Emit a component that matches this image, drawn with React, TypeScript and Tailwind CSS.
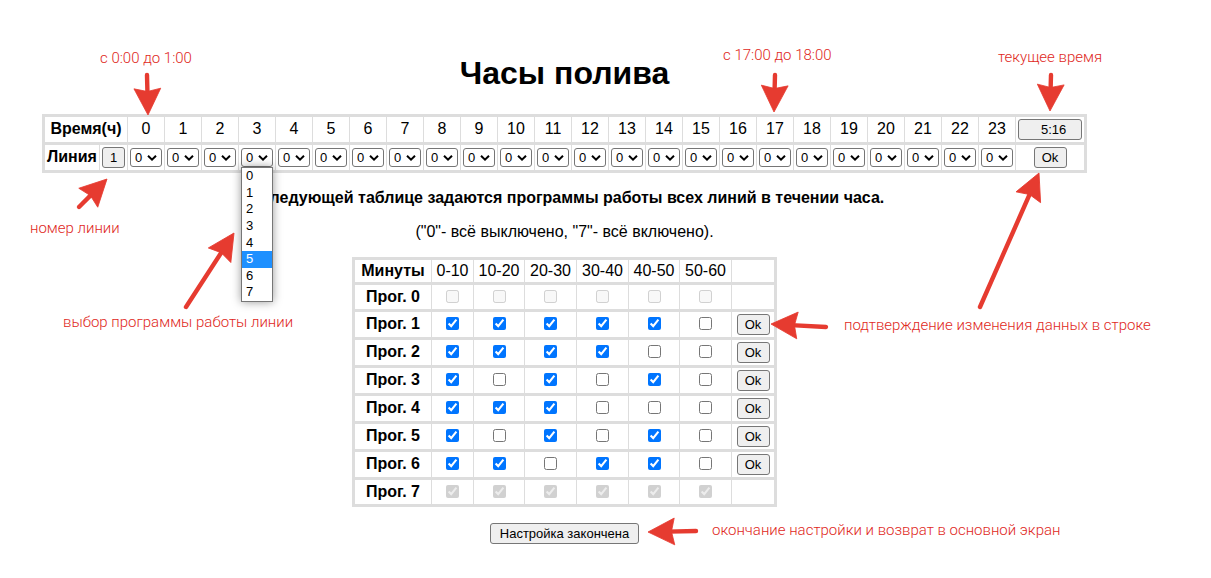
import { useState } from "react";

const HOURS = Array.from({ length: 24 }, (_, i) => i);
const CHOICES = [0, 1, 2, 3, 4, 5, 6, 7];
const OPEN_HOUR = 3;
const INTERVALS = ["0-10", "10-20", "20-30", "30-40", "40-50", "50-60"];
const INITIAL = ["000000", "111110", "111100", "101010", "111000", "101010", "110110", "111111"];

const ARROWS = [
  { from: [147, 75], to: [148, 115] },
  { from: [775, 75], to: [774, 112] },
  { from: [1051, 75], to: [1050, 111] },
  { from: [79, 207], to: [107, 179] },
  { from: [186, 307], to: [234, 233] },
  { from: [980, 307], to: [1039, 173] },
  { from: [826, 327], to: [771, 324] },
  { from: [696, 531], to: [648, 532] },
];

const NOTES = [
  { text: "с 0:00 до 1:00", place: "left-[100px] top-[49px]" },
  { text: "с 17:00 до 18:00", place: "left-[723px] top-[46px]" },
  { text: "текущее время", place: "left-[998px] top-[48px]" },
  { text: "номер линии", place: "left-[30px] top-[219px]" },
  { text: "выбор программы работы линии", place: "left-[63px] top-[313px]" },
  { text: "подтверждение изменения данных в строке", place: "left-[844px] top-[316px]" },
  { text: "окончание настройки и возврат в основной экран", place: "left-[712px] top-[521px]" },
];

const BUTTON =
  "h-[21px] rounded-[3px] border border-[#767676] bg-[#efefef] text-center text-[13px] leading-[17px] text-black";

function Arrow({ from, to }: { from: number[]; to: number[] }) {
  const dx = to[0] - from[0];
  const dy = to[1] - from[1];
  const length = Math.hypot(dx, dy);
  const angle = (Math.atan2(dy, dx) * 180) / Math.PI;
  return (
    <g transform={`translate(${to[0]} ${to[1]}) rotate(${angle})`}>
      <path d={`M${-length} 0H-20`} stroke="#e63b30" strokeWidth="4.4" strokeLinecap="round" />
      <path d="M0 0L-26.5 -13.4L-23.5 0L-26.5 13.4Z" fill="#e63b30" stroke="#e63b30" strokeWidth="0.8" />
    </g>
  );
}

function Annotations() {
  return (
    <div className="pointer-events-none absolute top-0 -left-[42px] z-20">
      <svg width="1211" height="578" fill="none" aria-hidden="true" className="max-w-none">
        {ARROWS.map((a, i) => (
          <Arrow key={i} from={a.from} to={a.to} />
        ))}
      </svg>
      {NOTES.map((n) => (
        <span
          key={n.text}
          className={`absolute font-[Roboto,sans-serif] text-[15px] leading-[18px] font-light whitespace-nowrap text-[#e0281c] ${n.place}`}
        >
          {n.text}
        </span>
      ))}
    </div>
  );
}

function HourSelect({ hour }: { hour: number }) {
  const [value, setValue] = useState("0");
  return (
    <div className="relative mx-auto w-8">
      <select
        aria-label={`Программа для часа ${hour}`}
        value={value}
        onChange={(e) => setValue(e.target.value)}
        className="block h-[19px] w-8 appearance-none rounded-[3px] border border-[#767676] bg-white pl-1 text-[13px] leading-[17px] text-black"
      >
        {CHOICES.map((c) => (
          <option key={c}>{c}</option>
        ))}
      </select>
      <svg
        viewBox="0 0 10 6"
        fill="none"
        aria-hidden="true"
        className="pointer-events-none absolute top-[7px] right-[5px] h-1.5 w-2.5"
      >
        <path d="M1 0.8L5 4.6L9 0.8" stroke="#000" strokeWidth="2" />
      </svg>
      {hour === OPEN_HOUR && (
        <ul className="absolute top-full left-0 z-10 grid h-[135px] w-8 grid-rows-8 border border-[#767676] bg-white text-left text-[13px] leading-4 shadow-[0_0_9px_rgba(0,0,0,0.4)]">
          {CHOICES.map((c) => (
            <li key={c} className={c === 5 ? "bg-[#1e90ff] pl-1 text-white" : "pl-1"}>
              {c}
            </li>
          ))}
        </ul>
      )}
    </div>
  );
}

function HoursTable() {
  return (
    <table className="border-separate border-spacing-0 border-3 border-[#ddd]">
      <colgroup>
        <col className="w-[54px]" />
        <col className="w-[28px]" />
        {HOURS.map((h) => (
          <col key={h} className="w-[37px]" />
        ))}
        <col className="w-[69px]" />
      </colgroup>
      <tbody>
        <tr className="h-[25px]">
          <th colSpan={2} className="p-0 pb-px">
            Время(ч)
          </th>
          {HOURS.map((h) => (
            <td key={h} className="border-l border-[#ddd] p-0 pb-px">
              {h}
            </td>
          ))}
          <td className="border-l border-[#ddd] p-0">
            <button type="button" className={`${BUTTON} mx-auto block w-16`}>
              {"\u00a0\u00a05:16"}
            </button>
          </td>
        </tr>
        <tr className="h-[28px]">
          <th className="border-t-3 border-[#ddd] p-0 pb-px">Линия</th>
          <td className="border-t-3 border-l border-[#ddd] p-0">
            <button type="button" className={`${BUTTON} mx-auto block w-[23px]`}>
              1
            </button>
          </td>
          {HOURS.map((h) => (
            <td key={h} className="border-t-3 border-l border-[#ddd] p-0">
              <HourSelect hour={h} />
            </td>
          ))}
          <td className="border-t-3 border-l border-[#ddd] p-0">
            <button type="button" className={`${BUTTON} mx-auto block w-[33px]`}>
              Ok
            </button>
          </td>
        </tr>
      </tbody>
    </table>
  );
}

function ProgramsTable() {
  const [programs, setPrograms] = useState(INITIAL.map((p) => p.split("").map((b) => b === "1")));
  const toggle = (row: number, col: number) =>
    setPrograms((all) => all.map((p, r) => (r === row ? p.map((v, c) => (c === col ? !v : v)) : p)));

  return (
    <table className="mt-4 border-separate border-spacing-0 border-3 border-[#ddd]">
      <colgroup>
        <col className="w-[76px]" />
        <col className="w-[42px]" />
        <col className="w-[51px]" />
        <col className="w-[52px]" />
        <col className="w-[52px]" />
        <col className="w-[51px]" />
        <col className="w-[52px]" />
        <col className="w-[43px]" />
      </colgroup>
      <tbody>
        <tr className="h-[22px]">
          <th className="p-0 pb-px">Минуты</th>
          {INTERVALS.map((t) => (
            <td key={t} className="border-l border-[#ddd] p-0 pb-px">
              {t}
            </td>
          ))}
          <td className="border-l border-[#ddd] p-0" />
        </tr>
        {programs.map((slots, row) => {
          const locked = row === 0 || row === 7;
          return (
            <tr key={row} className={locked ? "h-[27px]" : "h-[28px]"}>
              <th className="border-t-3 border-[#ddd] p-0 pb-px">Прог. {row}</th>
              {slots.map((on, col) => (
                <td key={col} className="border-t-3 border-l border-[#ddd] p-0 pb-0.5">
                  <input
                    type="checkbox"
                    aria-label={`Прог. ${row}, минуты ${INTERVALS[col]}`}
                    checked={on}
                    disabled={locked}
                    onChange={() => toggle(row, col)}
                    className="mx-auto block size-[13px]"
                  />
                </td>
              ))}
              <td className="border-t-3 border-l border-[#ddd] p-0">
                {!locked && (
                  <button type="button" className={`${BUTTON} mx-auto block w-[33px]`}>
                    Ok
                  </button>
                )}
              </td>
            </tr>
          );
        })}
      </tbody>
    </table>
  );
}

export default function App() {
  return (
    <div className="flex min-h-screen justify-center bg-white pr-[82px] font-['Liberation_Sans',Arial,sans-serif] text-base leading-[18px] text-black">
      <main className="relative flex flex-col items-center pt-[55px] pb-8 text-center">
        <h1 className="mb-[22px] text-[32px] leading-[37px] font-bold">Часы полива</h1>
        <HoursTable />
        <p className="mt-4 font-bold">
          В следующей таблице задаются программы работы всех линий в течении часа.
        </p>
        <p className="mt-4">("0"- всё выключено, "7"- всё включено).</p>
        <ProgramsTable />
        <button type="button" className={`${BUTTON} mt-4 min-w-[149px] px-2`}>
          Настройка закончена
        </button>
        <Annotations />
      </main>
    </div>
  );
}
